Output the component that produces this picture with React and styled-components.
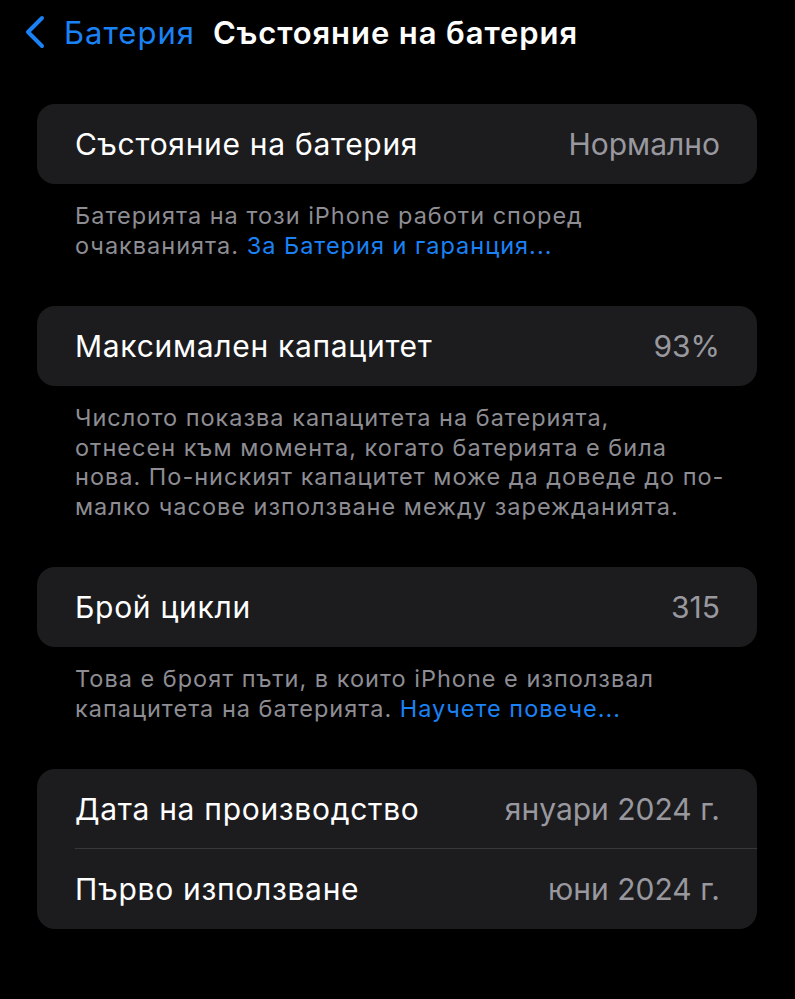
import React from "react";
import styled, { createGlobalStyle } from "styled-components";

const Global = createGlobalStyle`
  html, body { margin: 0; padding: 0; background: #000; }
  body { font-family: Inter, "Noto Sans", sans-serif; -webkit-font-smoothing: antialiased; }
`;

const Page = styled.div`
  width: 795px;
  min-height: 999px;
  background: #000;
  display: flex;
  flex-direction: column;
  font-family: Inter, "Noto Sans", sans-serif;
`;

const NavBar = styled.div`
  height: 64px;
  display: flex;
  align-items: center;
  padding-left: 24px;
`;

const Back = styled.div`
  display: flex;
  align-items: center;
  color: #1a82f5;
  font-size: 31px;
  letter-spacing: 1px;
`;

const Chevron = styled.svg`
  width: 22px;
  height: 34px;
  margin-right: 18px;
`;

const Title = styled.div`
  color: #fff;
  font-size: 31px;
  font-weight: 600;
  letter-spacing: 0.9px;
  margin-left: 18px;
`;

const Content = styled.div`
  display: flex;
  flex-direction: column;
  padding: 40px 38px 0 37px;
`;

const Card = styled.div`
  background: #1c1c1e;
  border-radius: 18px;
  display: flex;
  flex-direction: column;
`;

const Row = styled.div`
  height: 80px;
  display: flex;
  align-items: center;
  justify-content: space-between;
  padding: 0 37px 0 38px;
  position: relative;
  ${(p) =>
    p.$divider &&
    `&::after { content: ""; position: absolute; left: 38px; right: 0; bottom: 0; height: 1px; background: #38383a; }`}
`;

const Label = styled.span`
  color: #fff;
  font-size: 30px;
  letter-spacing: 0.7px;
`;

const Value = styled.span`
  color: #98989e;
  font-size: 30px;
  letter-spacing: 0px;
`;

const Footer = styled.div`
  color: #8d8d93;
  font-size: 23.5px;
  line-height: 29.5px;
  letter-spacing: 1px;
  padding: 17px 20px 46px 38px;
  white-space: nowrap;
`;

const Link = styled.span`
  color: #1a82f5;
`;

export default function App() {
  return (
    <Page lang="bg">
      <Global />
      <NavBar>
        <Back>
          <Chevron viewBox="0 0 22 34" fill="none">
            <path d="M18 3 L4 17 L18 31" stroke="#1a82f5" strokeWidth="4" strokeLinecap="round" strokeLinejoin="round" />
          </Chevron>
          Батерия
        </Back>
        <Title>Състояние на батерия</Title>
      </NavBar>
      <Content>
        <Card>
          <Row>
            <Label>Състояние на батерия</Label>
            <Value>Нормално</Value>
          </Row>
        </Card>
        <Footer>
          Батерията на този iPhone работи според
          <br />
          очакванията. <Link>За Батерия и гаранция...</Link>
        </Footer>
        <Card>
          <Row>
            <Label>Максимален капацитет</Label>
            <Value>93%</Value>
          </Row>
        </Card>
        <Footer>
          Числото показва капацитета на батерията,
          <br />
          отнесен към момента, когато батерията е била
          <br />
          нова. По-ниският капацитет може да доведе до по-
          <br />
          малко часове използване между зарежданията.
        </Footer>
        <Card>
          <Row>
            <Label>Брой цикли</Label>
            <Value>315</Value>
          </Row>
        </Card>
        <Footer>
          Това е броят пъти, в които iPhone е използвал
          <br />
          капацитета на батерията. <Link>Научете повече...</Link>
        </Footer>
        <Card>
          <Row $divider>
            <Label>Дата на производство</Label>
            <Value>януари 2024 г.</Value>
          </Row>
          <Row>
            <Label>Първо използване</Label>
            <Value>юни 2024 г.</Value>
          </Row>
        </Card>
      </Content>
    </Page>
  );
}
